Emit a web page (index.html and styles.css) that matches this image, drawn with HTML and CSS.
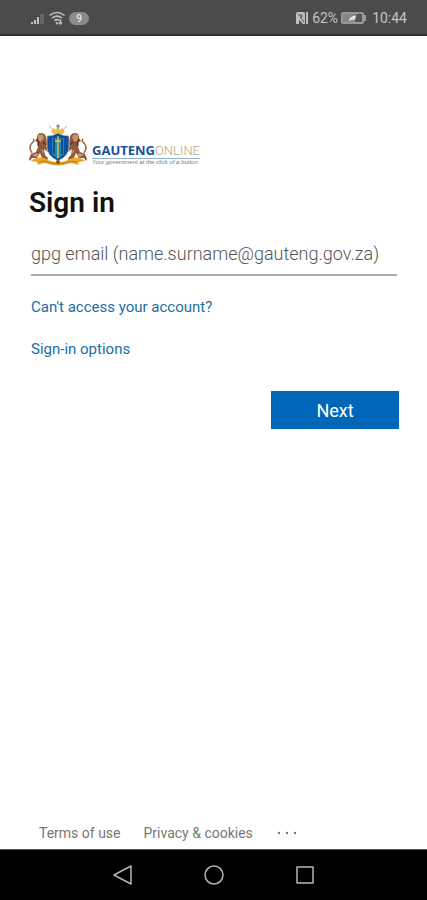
FILE: index.html
```html
<!DOCTYPE html>
<html lang="en">
<head>
<meta charset="utf-8">
<meta name="viewport" content="width=device-width, initial-scale=1">
<title>Sign in</title>
<link rel="stylesheet" href="styles.css">
</head>
<body>
<header class="status">
  <div class="status-group">
    <svg width="15" height="14" viewBox="0 0 15 14" aria-hidden="true">
      <path d="M1 13v-2h2v2zM4 13V9h2v4zM7 13V6h2v7z" fill="#c4c4c4"/>
      <path d="M10 13V4l1-1h3v10z" fill="#666"/>
    </svg>
    <svg width="18" height="14" viewBox="0 0 18 14" fill="none" stroke="#bdbdbd" stroke-width="1.500" aria-hidden="true">
      <path d="M1.500 4.500Q9-1.500 16.500 4.500M4 7.200Q9 3 14 7.200M6.300 9.800Q9 7.500 11.500 9.800"/>
      <path d="M8 11.500l1 1.300 1-1.300M12.500 8.500v4.500M11 11.500l1.500 1.500 1.500-1.500"/>
    </svg>
    <span class="badge">9</span>
  </div>
  <div class="status-group">
    <svg width="14" height="14" viewBox="0 0 14 14" aria-hidden="true">
      <path d="M1 3q0-2 2-2h5q2 0 2 2v10H8L4 9v4H1z" fill="#bdbdbd"/>
      <path d="M3 4h4v2H5l4 5" fill="none" stroke="#4b4b4b"/>
      <path d="M11 1h2v12h-2z" fill="#bdbdbd"/>
    </svg>
    <span>62%</span>
    <svg class="battery" width="26" height="12" viewBox="0 0 26 12" aria-hidden="true">
      <rect x=".8" y=".8" width="21.400" height="10.400" rx="1" fill="#858585" stroke="#a9a9a9" stroke-width="1.300"/>
      <path d="M15 2h6v8h-7z" fill="#555"/>
      <path d="M8 9q0-5 7-5.500Q15 8.500 10 8L8 9.500z" fill="#e5e5e5"/>
      <path d="M24 3v6" stroke="#aaa" stroke-width="1.700"/>
    </svg>
    <span>10:44</span>
  </div>
</header>
<main class="page">
  <div class="brand">
    <svg class="crest" width="58" height="42" viewBox="0 0 58 42" aria-hidden="true">
      <path d="M20 2L36 16M38 2L22 16" stroke="#b9b4a8" stroke-width="1"/>
      <path d="M22 7l3-3 2 2 2-4 2 4 2-2 3 3-2 3H24z" fill="#e9bd43"/>
      <path d="M27 2l2-2 2 2-2 3z" fill="#a98d6a"/>
      <g id="lion">
        <path d="M8 14Q8 9 12 9q4 0 5 4l1 4 3 2v3l-4-1 3 5-1 2-4-3 1 6 3 3-1 3-5-3-2-5-3 5H3l-2 3-1-2 2-5 5-2 2-5-1-5-2-1z" fill="#8f5a3c"/>
        <path d="M9 11l4-1 2 4-3 4-3-1zM3 31l5-2 2 2-3 2zM12 25l3 2-1 3z" fill="#c99467"/>
        <path d="M3 29Q-1 23 3 19q3-2 1-4" fill="none" stroke="#a16c4b" stroke-width="1.600"/>
        <path d="M8 15l2 3-1 4M14 18l3 3" fill="none" stroke="#56301f" stroke-width="1.200"/>
      </g>
      <use href="#lion" transform="matrix(-1 0 0 1 58 0)"/>
      <path d="M18 12q6 0 11-3 5 3 11 3v11q0 9-11 14-11-5-11-14z" fill="#0c4fa0" stroke="#d8cfa4" stroke-width=".7"/>
      <path d="M23 14h12v16l-6 5-6-5z" fill="#2487aa"/>
      <path d="M25 15v15M33 15v15" stroke="#123d82" stroke-width="1.500"/>
      <path d="M29 12v22M26 17h6" stroke="#e2c858" stroke-width="1.300"/>
      <path d="M2 37q5-5 13-3 7 4 14 4t14-4q8-2 13 3l-6 1-1 3q-7-3-11-1-9 3-18 0-5-2-11 1l-1-3z" fill="#e9a72b"/>
      <path d="M10 38q7-2 11 1 8 2 16 0 5-3 11-1" fill="none" stroke="#b67a24" stroke-width="1"/>
      <circle cx="29" cy="38" r="2" fill="#7a552b"/>
    </svg>
    <div class="wordmark">
      <div class="name"><b>GAUTENG</b><span>ONLINE</span></div>
      <div class="tagline">Your government at the click of a button</div>
    </div>
  </div>
  <h1>Sign in</h1>
  <form class="form">
    <input class="email" type="email" aria-label="Email" placeholder="gpg email (name.surname@gauteng.gov.za)">
    <a class="link" href="#">Can't access your account?</a>
    <a class="link" href="#">Sign-in options</a>
    <button class="next" type="button">Next</button>
  </form>
</main>
<footer class="footer">
  <a href="#">Terms of use</a>
  <a href="#">Privacy &amp; cookies</a>
  <button class="more" type="button" aria-label="More">
    <svg width="22" height="4" viewBox="0 0 22 4" fill="#777"><circle cx="3" cy="2" r="1.200"/><circle cx="11" cy="2" r="1.200"/><circle cx="19" cy="2" r="1.200"/></svg>
  </button>
</footer>
<nav class="nav">
  <button type="button" aria-label="Back"><svg width="22" height="22" viewBox="0 0 22 22"><path d="M19 2v18L2 11z"/></svg></button>
  <button type="button" aria-label="Home"><svg width="22" height="22" viewBox="0 0 22 22"><circle cx="11" cy="11" r="9"/></svg></button>
  <button type="button" aria-label="Recent apps"><svg width="22" height="22" viewBox="0 0 22 22"><path d="M3 3h16v16H3z"/></svg></button>
</nav>
</body>
</html>
```
FILE: styles.css
```css
* { box-sizing: border-box; }
body {
  margin: 0;
  min-height: 100vh;
  display: flex;
  flex-direction: column;
  background: #fff;
  color: #111;
  font-family: Roboto, "Liberation Sans", sans-serif;
}
button { border: 0; padding: 0; background: none; font: inherit; }
a { text-decoration: none; }
svg { display: block; flex: none; }

.status {
  height: 36px;
  padding: 2px 20px 0 30px;
  display: flex;
  justify-content: space-between;
  align-items: center;
  background: #4b4b4b;
  border-bottom: 2px solid #303030;
  color: #c4c4c4;
  font-size: 14px;
}
.status-group { display: flex; align-items: center; gap: 3px; }
.badge {
  width: 20px;
  height: 13px;
  border-radius: 7px;
  background: #8b8b8b;
  color: #e4e4e4;
  font-size: 10px;
  font-weight: 500;
  line-height: 13px;
  text-align: center;
}
.battery { margin-right: 2px; }

.page { flex: 1; padding: 88px 28px 0 29px; }
.brand { display: flex; align-items: flex-end; gap: 5px; }
.wordmark { padding-bottom: 1px; white-space: nowrap; }
.name {
  display: flex;
  border-bottom: 1px solid #8fb0cf;
  color: #b9a778;
  font-family: Roboto, sans-serif;
  font-size: 13px;
  font-weight: 300;
  line-height: 15px;
}
.name b { color: #17519b; font-family: "Open Sans", sans-serif; font-weight: 700; }
.tagline {
  color: #777;
  font-family: "Liberation Sans", sans-serif;
  font-size: 6px;
  font-style: italic;
  line-height: 6px;
}
h1 { margin: 20px 0 0; font-size: 28px; font-weight: 600; line-height: 34px; }
.form { display: flex; flex-direction: column; align-items: flex-start; }
.email {
  width: calc(100% - 4px);
  height: 40px;
  margin: 16px 2px 21px;
  padding: 0 0 4px;
  border: 0;
  border-bottom: 2px solid #aaa;
  border-radius: 0;
  outline: 0;
  background: none;
  color: #333;
  font: 300 18px Roboto, sans-serif;
}
.email::placeholder { color: #555; opacity: 1; }
.link { margin: 0 2px 22px; color: #1a6fa3; font-size: 15px; line-height: 20px; }
.next {
  width: 128px;
  height: 38px;
  margin-top: 10px;
  align-self: flex-end;
  background: #0067b8;
  color: #fff;
  font-size: 18px;
}
.footer {
  display: flex;
  align-items: center;
  gap: 23px;
  padding: 0 39px 7px;
  font-size: 14px;
  line-height: 18px;
}
.footer a { color: #777; }
.nav {
  height: 51px;
  display: flex;
  justify-content: center;
  align-items: center;
  gap: 69px;
  border-top: 1px solid #555;
  background: #000;
}
.nav svg { fill: none; stroke: #b5b5b5; stroke-width: 1.5; stroke-linejoin: round; }
```
